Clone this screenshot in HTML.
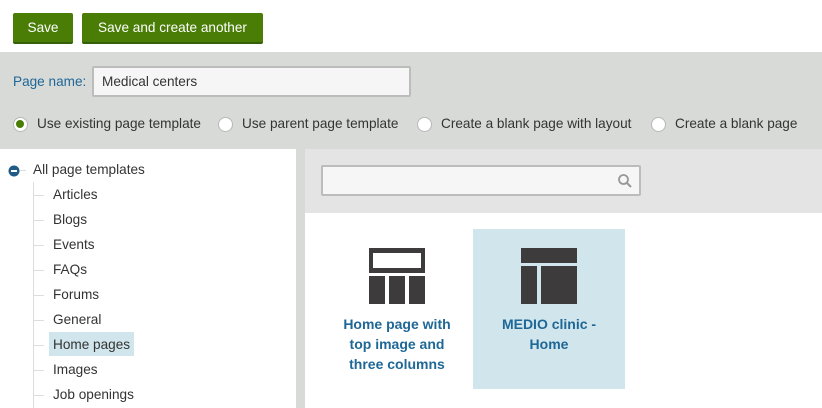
<!DOCTYPE html>
<html><head><style>
*{box-sizing:border-box;margin:0;padding:0}
body{width:822px;height:408px;overflow:hidden;background:#fff;font-family:"Liberation Sans",sans-serif;font-size:13.6px;color:#333;position:relative}
.a{position:absolute}
.btn{background:#497d06;color:#fff;border-bottom:2px solid #35600a;border-radius:2px;height:31px;line-height:30px;text-align:center;font-size:13.6px}
.radio{width:15px;height:15px;border-radius:50%;background:#fff;border:1.5px solid #b8b8b8}
.tl{position:absolute;left:53px;color:#333}
.dash{position:absolute;left:34px;width:10px;height:1px;background:#ddd}
</style></head><body>
<div class="a btn" style="left:13px;top:13px;width:60px">Save</div>
<div class="a btn" style="left:82px;top:13px;width:181px">Save and create another</div>
<div class="a" style="left:0;top:52px;width:822px;height:97px;background:#d8dad8"></div>
<div class="a" style="left:13px;top:74px;color:#1e6796">Page name:</div>
<div class="a" style="left:92px;top:66px;width:319px;height:31px;background:#f6f6f6;border:2px solid #bcbcbc;border-radius:2px;padding:6px 8px">Medical centers</div>
<div class="a radio" style="left:13px;top:117px;padding:2px"><div style="width:8px;height:8px;border-radius:50%;background:#497d06"></div></div>
<div class="a" style="left:37px;top:116px">Use existing page template</div>
<div class="a radio" style="left:218px;top:117px"></div>
<div class="a" style="left:242px;top:116px">Use parent page template</div>
<div class="a radio" style="left:417px;top:117px"></div>
<div class="a" style="left:441px;top:116px">Create a blank page with layout</div>
<div class="a radio" style="left:651px;top:117px"></div>
<div class="a" style="left:675px;top:116px">Create a blank page</div>
<div class="a" style="left:296px;top:149px;width:9px;height:259px;background:#d8dad8"></div>
<div class="a" style="left:305px;top:149px;width:517px;height:64px;background:#e4e4e4"></div>
<div class="a" style="left:321px;top:165px;width:320px;height:31px;background:#f6f6f6;border:2px solid #bcbcbc;border-radius:2px"></div>
<svg class="a" style="left:617px;top:173px" width="16" height="16"><circle cx="6.5" cy="6.5" r="4.5" fill="none" stroke="#999" stroke-width="1.8"/><path d="M10 10l4 4" stroke="#999" stroke-width="2"/></svg>
<svg class="a" style="left:8px;top:165px" width="12" height="12"><circle cx="6" cy="6" r="5.5" fill="#1e5b88"/><rect x="3" y="5" width="6" height="2" fill="#fff"/></svg>
<div class="a" style="left:20px;top:170px;width:6px;height:1px;background:#ddd"></div>
<div class="a" style="left:33px;top:162px">All page templates</div>
<div class="a" style="left:33px;top:182px;width:1px;height:226px;background:#ddd"></div>
<div class="a" style="left:49px;top:332px;width:85px;height:24px;background:#d0e5ec"></div>
<div class="dash" style="top:195px"></div><div class="tl" style="top:187px">Articles</div>
<div class="dash" style="top:220px"></div><div class="tl" style="top:212px">Blogs</div>
<div class="dash" style="top:245px"></div><div class="tl" style="top:237px">Events</div>
<div class="dash" style="top:270px"></div><div class="tl" style="top:262px">FAQs</div>
<div class="dash" style="top:295px"></div><div class="tl" style="top:287px">Forums</div>
<div class="dash" style="top:320px"></div><div class="tl" style="top:312px">General</div>
<div class="dash" style="top:345px"></div><div class="tl" style="top:337px">Home pages</div>
<div class="dash" style="top:370px"></div><div class="tl" style="top:362px">Images</div>
<div class="dash" style="top:395px"></div><div class="tl" style="top:387px">Job openings</div>
<svg class="a" style="left:369px;top:248px" width="56" height="56"><rect x="0" y="0" width="56" height="25" fill="#3d3b3b"/><rect x="4" y="5" width="48" height="15" fill="#fff"/><rect x="0" y="28" width="16" height="28" fill="#3d3b3b"/><rect x="20" y="28" width="16" height="28" fill="#3d3b3b"/><rect x="40" y="28" width="16" height="28" fill="#3d3b3b"/></svg>
<div class="a" style="left:323px;top:314px;width:148px;text-align:center;font-weight:bold;color:#1e6796;line-height:20px;font-size:14px">Home page with<br>top image and<br>three columns</div>
<div class="a" style="left:473px;top:229px;width:152px;height:160px;background:#d0e5ec"></div>
<svg class="a" style="left:521px;top:248px" width="56" height="56"><rect x="0" y="0" width="56" height="15" fill="#3d3b3b"/><rect x="0" y="18" width="16" height="38" fill="#3d3b3b"/><rect x="20" y="18" width="36" height="38" fill="#3d3b3b"/></svg>
<div class="a" style="left:473px;top:314px;width:152px;text-align:center;font-weight:bold;color:#1e6796;line-height:20px;font-size:14px">MEDIO clinic -<br>Home</div>
</body></html>
